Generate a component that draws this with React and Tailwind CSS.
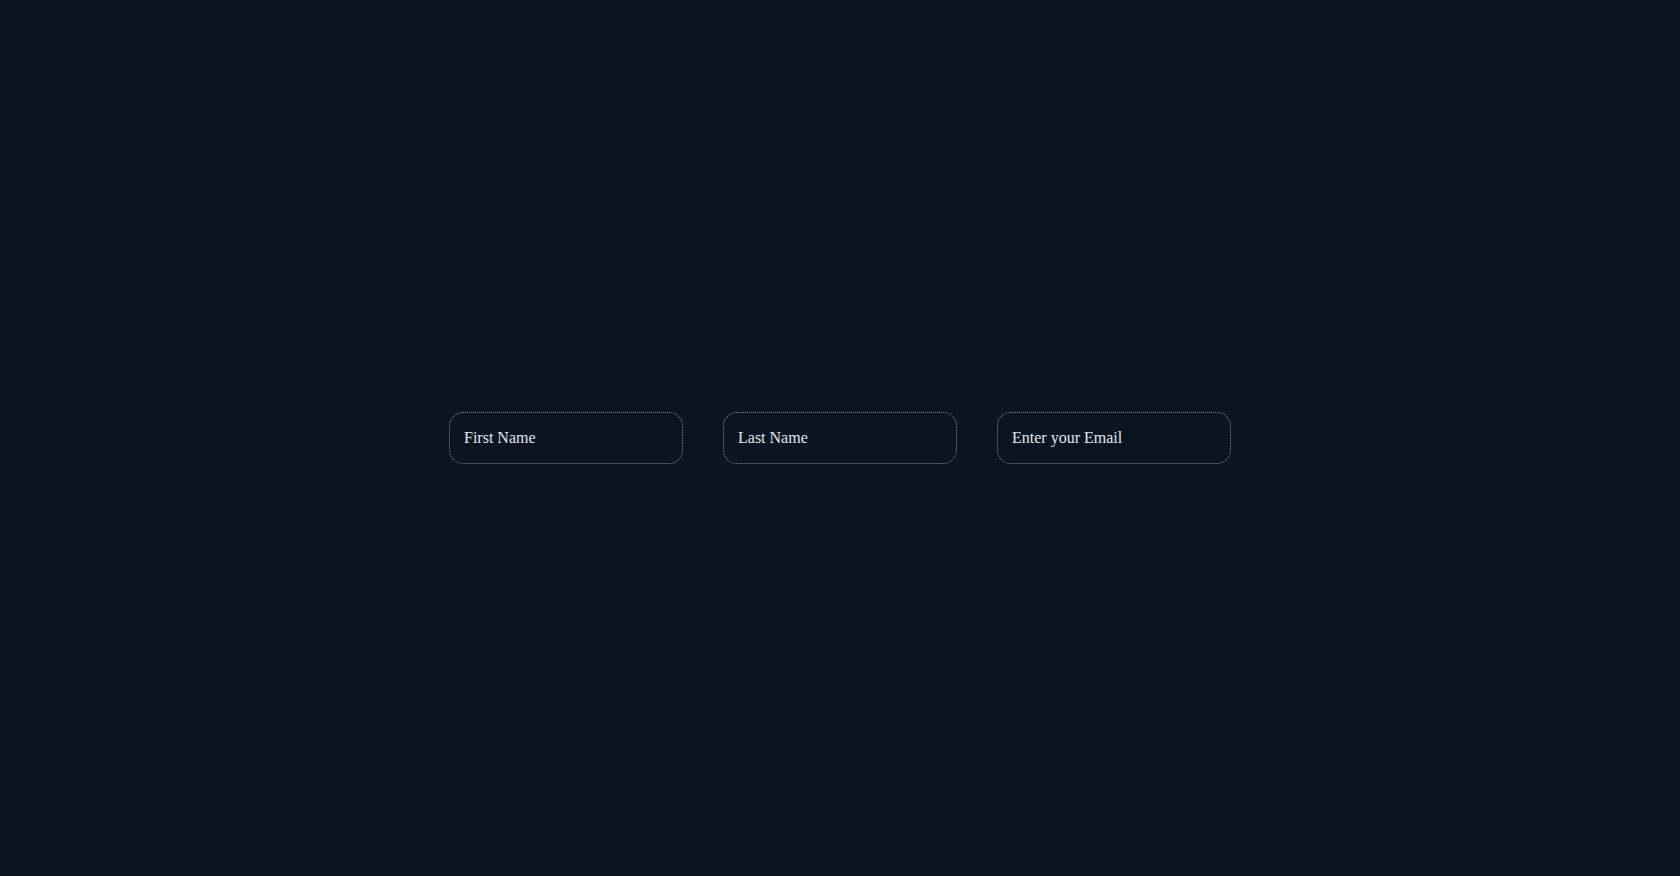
export default function App() {
  const fields = [
    { name: "firstName", type: "text", placeholder: "First Name" },
    { name: "lastName", type: "text", placeholder: "Last Name" },
    { name: "email", type: "email", placeholder: "Enter your Email" },
  ];

  return (
    <div className="min-h-screen bg-[#0b1521] flex items-center justify-center gap-10">
      {fields.map((f) => (
        <input
          key={f.name}
          name={f.name}
          type={f.type}
          placeholder={f.placeholder}
          className="w-[234px] h-[52px] px-[14px] rounded-[14px] border border-dotted border-[#7d8796] bg-transparent text-base text-[#e2e6ec] placeholder:text-[#e2e6ec] outline-none font-['Liberation_Serif',serif]"
        />
      ))}
    </div>
  );
}
